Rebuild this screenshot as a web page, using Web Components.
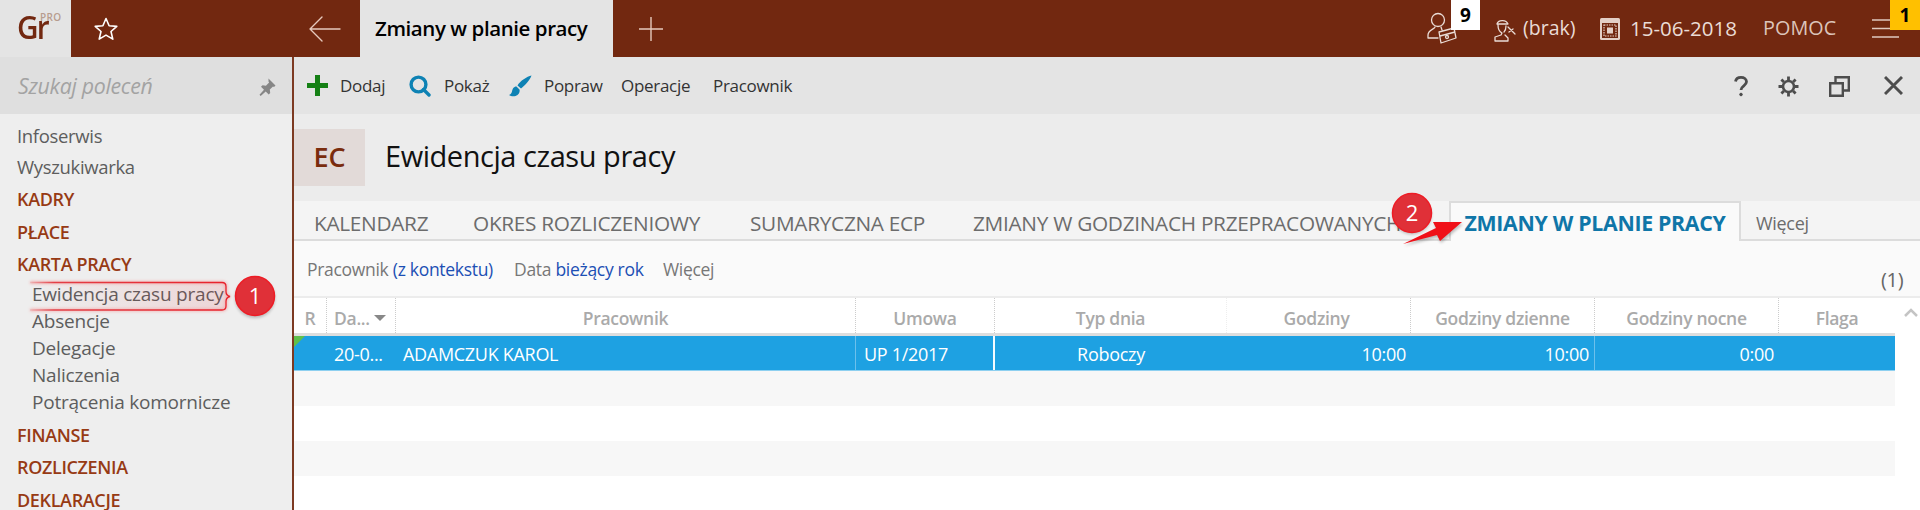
<!DOCTYPE html>
<html lang="pl"><head><meta charset="utf-8"><title>Ewidencja czasu pracy</title>
<style>
html,body{margin:0;padding:0;background:#fff;overflow:hidden}
body{width:1920px;height:510px;font-family:"Open Sans","Noto Sans",sans-serif;color:#555}
</style></head><body>
<gr-shell>
  <gr-topbar slot="top"></gr-topbar>
  <gr-sidebar slot="side">
    <gr-nav>Infoserwis</gr-nav><gr-nav style="margin-top:6px">Wyszukiwarka</gr-nav>
    <gr-nav kind="head" style="margin-top:4px">KADRY</gr-nav><gr-nav kind="head">PŁACE</gr-nav><gr-nav kind="head">KARTA PRACY</gr-nav>
    <gr-nav kind="sub">Ewidencja czasu pracy</gr-nav><gr-nav kind="sub">Absencje</gr-nav><gr-nav kind="sub">Delegacje</gr-nav><gr-nav kind="sub">Naliczenia</gr-nav><gr-nav kind="sub">Potrącenia komornicze</gr-nav>
    <gr-nav kind="head" style="margin-top:3px">FINANSE</gr-nav><gr-nav kind="head">ROZLICZENIA</gr-nav><gr-nav kind="head">DEKLARACJE</gr-nav>
  </gr-sidebar>
  <gr-toolbar slot="main"></gr-toolbar>
  <gr-title slot="main" code="EC">Ewidencja czasu pracy</gr-title>
  <gr-tabs slot="main"></gr-tabs>
  <gr-filter slot="main"></gr-filter>
  <gr-table slot="main"></gr-table>
</gr-shell>
<gr-callouts></gr-callouts>
<script>
function def(name, html, extra){
  const t=document.createElement('template'); t.innerHTML=html;
  customElements.define(name, class extends HTMLElement{
    constructor(){super();this.attachShadow({mode:'open'}).appendChild(t.content.cloneNode(true));}
    connectedCallback(){ if(extra) extra.call(this); }
  });
}
const ICON='fill="none" stroke="currentColor" stroke-linecap="round" stroke-linejoin="round"';
def('gr-shell',`<style>
:host{display:grid;grid-template-columns:292px 2px 1fr;grid-template-rows:57px 453px;width:1920px;height:510px;overflow:hidden}
.t{grid-column:1/-1}.s{background:#eee;overflow:hidden}.l{background:#7d3a22}.m{display:flex;flex-direction:column;min-width:0;overflow:hidden}
</style><div class="t"><slot name="top"></slot></div><div class="s"><slot name="side"></slot></div><div class="l"></div><div class="m"><slot name="main"></slot></div>`);

def('gr-topbar',`<style>
:host{display:flex;height:57px;background:#722810;color:#eadcd6;align-items:center;font-size:20px}
.logo{width:71px;height:57px;background:#e4e4e4;box-sizing:border-box;position:relative;flex:none;color:#722810}
.g{position:absolute;left:17px;top:9px;font:600 33px/36px "Open Sans",sans-serif;letter-spacing:-2px;transform:scaleX(.9);transform-origin:0 0}
.p{position:absolute;left:40px;top:12px;font:600 10px/10px "Open Sans",sans-serif;letter-spacing:.4px;color:#b79c8e}
.star{margin-left:22px;flex:none;color:#fff;display:flex}
.back{margin-left:190px;flex:none;display:flex;color:#e6c9bd}
.tab{margin-left:19px;width:253px;height:57px;background:#e4e4e4;color:#000;flex:none;box-sizing:border-box;padding:0 0 2px 15px;display:flex;align-items:center;font-size:20.500px;font-weight:600;letter-spacing:-.42px}
.plus{margin-left:26px;display:flex;flex:none;color:#e6c9bd}
.r{margin-left:auto;width:493px;height:57px;position:relative;flex:none}
.b{position:absolute;top:0;height:30px;font-weight:700;font-size:19px;color:#000;display:flex;align-items:center;justify-content:center}
.nine{left:24px;width:29px;background:#fff}.one{right:0;width:30px;background:#ffc000}
.ic{display:flex;position:absolute}
.tx{position:absolute;top:15px;line-height:26px;white-space:nowrap}
</style>
<div class="logo"><span class="g">Gr</span><span class="p">PRO</span></div>
<span class="star"><svg width="26" height="26" viewBox="0 0 26 26" ${ICON} stroke-width="1.6"><path d="M13 2.500l3.100 7.200 7.700.7-5.800 5.100 1.800 7.600-6.800-4-6.800 4 1.800-7.600-5.800-5.100 7.700-.7z"/></svg></span>
<span class="back"><svg width="32" height="26" viewBox="0 0 32 26" ${ICON} stroke-width="1.4"><path d="M1 13h30M13 1L1 13l12 12"/></svg></span>
<div class="tab">Zmiany w planie pracy</div>
<span class="plus"><svg width="24" height="24" viewBox="0 0 24 24" ${ICON} stroke-width="1.4"><path d="M12 0v24M0 12h24"/></svg></span>
<div class="r">
  <span class="ic" style="left:0;top:12px"><svg width="30" height="34" viewBox="0 0 30 34" ${ICON} stroke-width="1.3"><circle cx="11" cy="8" r="6.500"/><path d="M8 15c0 2-7 3-7 8v3h10M14 15l1 3M12 20l15-4 2 10-15 5zM13 24l15-4"/><circle cx="20" cy="25" r="1.500"/></svg></span>
  <span class="b nine">9</span>
  <span class="ic" style="left:66px;top:18px"><svg width="24" height="24" viewBox="0 0 24 24" ${ICON} stroke-width="1.3"><path d="M4 6c1-4 9-5 11 0zM5 7c0 5 2 7 4 8l-1 2-6 2v4h13v-3l-3-3M13 8c0 3-1 5-2 6M15 9l7 7M16 14l4-3"/></svg></span>
  <span class="tx" style="left:96px;font-size:19.500px">(brak)</span>
  <span class="ic" style="left:173px;top:18px"><svg width="20" height="22" viewBox="0 0 20 22"><rect x="0" y="0" width="20" height="22" rx="1.500" fill="#e3cfc6"/><rect x="2" y="5" width="16" height="15" fill="#722810"/><path d="M4 7h12v11H4z" fill="none" stroke="#e3cfc6" stroke-dasharray="1.500 1" stroke-width="1.200"/><rect x="7" y="9.500" width="6" height="6" fill="#e3cfc6"/></svg></span>
  <span class="tx" style="left:203px;font-size:20.500px">15-06-2018</span>
  <span class="tx" style="left:336px;font-size:19.800px;color:#dcc4ba;letter-spacing:.05px">POMOC</span>
  <span class="ic" style="left:445px;top:19px"><svg width="27" height="19" viewBox="0 0 27 19" fill="none" stroke="#e0c8be" stroke-width="1.300"><path d="M0 1h27M0 9.500h27M0 18h27"/></svg></span>
  <span class="b one">1</span>
</div>`);

def('gr-sidebar',`<style>
:host{display:block;height:453px;overflow:hidden}
.q{height:57px;background:#dfdfdf;display:flex;align-items:center;position:relative;padding-left:18px;color:#a3a3a3;font-style:italic;font-size:21.300px;letter-spacing:-.3px}
.pin{position:absolute;left:258px;top:21px;display:flex}
.n{padding:9px 0 0 17px;display:flex;flex-direction:column}
</style><div class="q">Szukaj poleceń<span class="pin"><svg width="18" height="18" viewBox="0 0 18 18" fill="#868686"><path d="M10.500 0.500l7 7-1.500 1.500-1-.6-3.200 3.200.4 3.400-1.500 1.500-3-3-5 4.500-1.200-1.200 4.500-5-3-3 1.500-1.500 3.400.4 3.200-3.200-.6-1z"/></svg></span></div>
<div class="n"><slot></slot></div>`);

def('gr-nav',`<style>
:host{display:block;font-size:18.500px;line-height:25px;color:#5d5d5d;letter-spacing:-.33px;white-space:nowrap}
:host([kind=head]){font-weight:600;font-size:18px;color:#973a14;line-height:32.500px;letter-spacing:-.35px}
:host([kind=sub]){padding-left:15px;line-height:27px;font-size:19px;letter-spacing:-.22px}
</style><slot></slot>`);

def('gr-toolbar',`<style>
:host{display:flex;align-items:center;height:57px;background:#e4e4e4;color:#333;font-size:17px;letter-spacing:-.3px;position:relative;flex:none}
.i{display:flex;align-items:center;flex:none;position:absolute;top:0;height:56px}
.i svg{display:block}
.a{position:absolute;top:18px;display:flex}
</style>
<span class="a" style="left:13px"><svg width="21" height="21" viewBox="0 0 21 21" fill="#158015"><path d="M8 0h5v8h8v5h-8v8H8v-8H0V8h8z"/></svg></span>
<span class="i" style="left:46px">Dodaj</span>
<span class="a" style="left:115px"><svg width="22" height="22" viewBox="0 0 22 22" fill="none" stroke="#0e82b4" stroke-width="3.400"><circle cx="9.500" cy="9.500" r="7.400"/><path d="M14.500 14.500L20 20" stroke-linecap="round"/></svg></span>
<span class="i" style="left:150px">Pokaż</span>
<span class="a" style="left:215px"><svg width="23" height="22" viewBox="0 0 23 22" fill="#0e82b4"><path d="M22.500 0.500C18 1.500 11 6 8.500 10.500l3.500 3C16 10.500 21 5 22.500 0.500zM7.500 11.500C4.500 11.500 3.500 14 3 16.500 2.500 18.500 1.500 19.500 0 20c2 1.500 6 2 8.500 0 2-1.700 2.500-3.900 2-5.500z"/></svg></span>
<span class="i" style="left:250px">Popraw</span>
<span class="i" style="left:327px">Operacje</span>
<span class="i" style="left:419px">Pracownik</span>
<span class="a" style="left:1440px;top:19px;color:#4d4d4d"><svg width="14" height="21" viewBox="0 0 14 21" fill="none" stroke="#4d4d4d" stroke-width="2.800"><path d="M1.500 5.500C2 2.500 4 1.400 7 1.400s5.500 1.600 5.500 4.400c0 4-5.500 4-5.500 8.200"/><circle cx="7" cy="18.500" r="1.300" fill="#4d4d4d" stroke-width="1"/></svg></span>
<span class="a" style="left:1484px;top:19px"><svg width="21" height="21" viewBox="0 0 21 21" fill="none" stroke="#4d4d4d"><circle cx="10.500" cy="10.500" r="5.500" stroke-width="2.600"/><path d="M10.500 0.500v3.500M10.500 17v3.500M.5 10.500H4M17 10.500h3.500M3.400 3.400l2.500 2.500M15.100 15.100l2.500 2.500M17.600 3.400l-2.500 2.500M5.900 15.100l-2.500 2.500" stroke-width="2.800"/></svg></span>
<span class="a" style="left:1535px;top:19px"><svg width="21" height="21" viewBox="0 0 21 21" fill="none" stroke="#4d4d4d" stroke-width="2.400"><path d="M1.200 7.200h12.600v12.600H1.200zM6.500 6V1.200h13.300v13.300H15"/></svg></span>
<span class="a" style="left:1590px;top:19px"><svg width="19" height="19" viewBox="0 0 19 19" fill="none" stroke="#4d4d4d" stroke-width="2.900"><path d="M1 1l17 17M18 1L1 18"/></svg></span>`);

def('gr-title',`<style>
:host{display:flex;height:87px;background:#ececec;align-items:flex-start;flex:none;box-sizing:border-box;padding-top:15px}
.c{width:71px;height:57px;box-sizing:border-box;padding-bottom:3px;background:#e2dad8;color:#7a2c0e;font-size:27px;font-weight:600;display:flex;align-items:center;justify-content:center;letter-spacing:-.2px;flex:none}
.t{margin-left:20px;height:57px;box-sizing:border-box;padding-bottom:4px;display:flex;align-items:center;font-size:29px;color:#111;letter-spacing:-.45px}
</style><div class="c">EC</div><div class="t"><slot></slot></div>`,function(){this.shadowRoot.querySelector('.c').textContent=this.getAttribute('code')});

def('gr-tabs',`<style>
:host{display:flex;height:40px;background:#f4f4f4;border-bottom:2px solid #dcdcdc;box-sizing:border-box;position:relative;color:#6c6c6c;font-size:20.800px;letter-spacing:-.3px;flex:none;white-space:nowrap}
span{position:absolute;top:0;line-height:44px}
.act{left:1155px;top:0;height:40px;width:292px;background:#fafafa;border:2px solid #dcdcdc;border-bottom:0;box-sizing:border-box;color:#0f76a8;font-weight:700;font-size:21.300px;letter-spacing:-.3px;line-height:39px;text-align:center}
.m{font-size:18px;left:1462px}
</style>
<span style="left:20px">KALENDARZ</span><span style="left:179px">OKRES ROZLICZENIOWY</span><span style="left:456px">SUMARYCZNA ECP</span><span style="left:679px">ZMIANY W GODZINACH PRZEPRACOWANYCH</span><span class="act">ZMIANY W PLANIE PRACY</span><span class="m">Więcej</span>`);

def('gr-filter',`<style>
:host{display:block;height:57px;background:#fafafa;border-bottom:2px solid #ececec;box-sizing:border-box;position:relative;color:#777;font-size:17.500px;letter-spacing:-.3px;flex:none;white-space:nowrap}
span{position:absolute;top:16px;line-height:24px}b{font-weight:400;color:#1c4fb4}
</style>
<span style="left:13px">Pracownik <b>(z kontekstu)</b></span><span style="left:220px">Data <b>bieżący rok</b></span><span style="left:369px">Więcej</span>
<span style="left:1587px;top:27px;font-size:20px;color:#666">(1)</span>`);

def('gr-table',`<style>
:host{display:block;position:relative;font-size:16px;flex:1;background:#fff;white-space:nowrap}
.g{display:grid;grid-template-columns:33px 69px 460px 139px 232px 184px 184px 184px 116px;width:1601px}
.h{height:35px;border-bottom:3px solid #dedede;color:#aaa;font-weight:600;font-size:17.500px;letter-spacing:-.3px}
.h div{display:flex;align-items:center;justify-content:center;border-right:1px dotted #ccc;height:35px;box-sizing:border-box;padding-top:4px}
.h div:nth-child(5){border-right-color:#eee}.h div:nth-child(6){padding-right:4px}.h div:last-child{border:0}
.h .d{justify-content:flex-start;padding-left:7px;gap:4px}
.d i{width:0;height:0;border:6px solid transparent;border-top:6px solid #888;border-bottom:0}
.rw{height:34px;background:#1ea1e2;color:#fff;border-bottom:1px solid #8ed0f0;box-sizing:content-box;position:relative;font-size:18px;letter-spacing:-.3px}
.rw div{display:flex;align-items:center;border-right:1px solid #6cc0ec;box-sizing:border-box;height:34px;padding-top:2px}
.rw div.w{border-right:2px solid #f4fbff}.rw div.n{border-right:0}
.rw .R{justify-content:flex-end;padding-right:5px}.rw .C{justify-content:center}
.tri{position:absolute;left:0;top:0;width:0;height:0;border-style:solid;border-width:11px 11px 0 0;border-color:#5fc04c transparent transparent transparent}
.e{height:35px}.e.x{background:#f7f7f7}
.up{position:absolute;left:1610px;top:10px}
</style>
<div class="g h"><div>R</div><div class="d">Da...<i></i></div><div>Pracownik</div><div>Umowa</div><div>Typ dnia</div><div>Godziny</div><div>Godziny dzienne</div><div>Godziny nocne</div><div>Flaga</div></div>
<div class="g rw"><span class="tri"></span><div class="n"></div><div class="n" style="padding-left:7px">20-0...</div><div style="padding-left:7px">ADAMCZUK KAROL</div><div class="w" style="padding-left:8px">UP 1/2017</div><div class="n C">Roboczy</div><div class="n R">10:00</div><div class="R">10:00</div><div class="n R">0:00</div><div class="n"></div></div>
<div class="e x" style="width:1601px"></div><div class="e" style="width:1601px"></div><div class="e x" style="width:1601px"></div><div class="e"></div>
<svg class="up" width="14" height="9" viewBox="0 0 14 9" fill="none" stroke="#c4c4c4" stroke-width="2.500"><path d="M1 8l6-6 6 6"/></svg>`);

def('gr-callouts',`<style>
:host{display:block;position:absolute;left:0;top:0;width:1920px;height:510px;pointer-events:none}
svg{position:absolute;left:0;top:0}
.n{position:absolute;color:#fff;font-size:22px;width:40px;height:40px;display:flex;align-items:center;justify-content:center}
</style>
<svg width="1920" height="510" viewBox="0 0 1920 510">
<defs><linearGradient id="fd" x1="0" x2="1"><stop offset="0" stop-color="#e23038" stop-opacity=".15"/><stop offset=".12" stop-color="#e23038" stop-opacity=".9"/><stop offset="1" stop-color="#e8202a"/></linearGradient>
<linearGradient id="fl" x1="0" x2="1"><stop offset="0" stop-color="#e23038" stop-opacity="0"/><stop offset="1" stop-color="#e23038" stop-opacity=".13"/></linearGradient>
<filter id="sh" x="-30%" y="-30%" width="160%" height="160%"><feGaussianBlur stdDeviation="1.500"/></filter></defs>
<path d="M30 282.500H222q4 0 4 4v5q0 4 4 5q-4 1-4 5v4.500q0 4-4 4H30z" fill="url(#fl)"/>
<path d="M30 282.500H222q4 0 4 4v5q0 4 4 5q-4 1-4 5v4.500q0 4-4 4H30" fill="none" stroke="#f2a0a0" stroke-width="3" filter="url(#sh)" opacity=".7"/>
<path d="M30 282.500H222q4 0 4 4v5q0 4 4 5q-4 1-4 5v4.500q0 4-4 4H30" fill="none" stroke="url(#fd)" stroke-width="1.300"/>
<circle cx="255" cy="298" r="20" fill="#000" opacity=".22" filter="url(#sh)"/>
<circle cx="255" cy="296" r="19.500" fill="#e03038" stroke="#ee1c25" stroke-width="1.500"/>
<path d="M1403 244L1436 228 1433 222 1462 222 1440 241 1437 235z" fill="#000" opacity=".25" filter="url(#sh)" transform="translate(1 2)"/>
<path d="M1403 244L1436 228 1433 222 1462 222 1440 241 1437 235z" fill="#f01018"/>
<circle cx="1412" cy="215" r="19.500" fill="#000" opacity=".22" filter="url(#sh)"/>
<circle cx="1412" cy="213" r="19.500" fill="#e03038" stroke="#ee1c25" stroke-width="1.500"/>
</svg>
<span class="n" style="left:235px;top:275px">1</span><span class="n" style="left:1392px;top:192px">2</span>`);
</script>
</body></html>
